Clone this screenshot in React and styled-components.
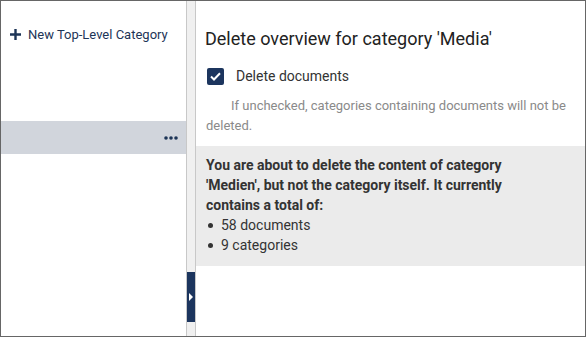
import React from 'react'
import styled, { createGlobalStyle } from 'styled-components'

const Global = createGlobalStyle`
  html, body { margin: 0; padding: 0; background: #fff; }
  body { font-family: Roboto, "Liberation Sans", sans-serif; }
`

const Frame = styled.div`
  width: 586px;
  height: 337px;
  box-sizing: border-box;
  border: 1px solid #666;
  display: flex;
  background: #fff;
`
const Sidebar = styled.div`
  width: 185px;
  border-right: 1px solid #c8c8c8;
  display: flex;
  flex-direction: column;
`
const NewButton = styled.div`
  display: flex;
  align-items: center;
  gap: 7px;
  height: 20px;
  margin-top: 23px;
  padding-left: 9px;
  color: #1d3557;
  font-size: 13px;
`
const TreeRow = styled.div`
  margin-top: 77px;
  height: 33px;
  background: #d1d5dc;
  display: flex;
  align-items: center;
  justify-content: flex-end;
  padding-right: 8px;
`
const Splitter = styled.div`
  width: 8px;
  background: #f0f0f0;
  border-right: 1px solid #c8c8c8;
  display: flex;
  flex-direction: column;
  justify-content: flex-end;
  padding-bottom: 14px;
`
const Tab = styled.div`
  height: 50px;
  background: #1c355e;
  display: flex;
  align-items: center;
  justify-content: center;
`
const Content = styled.div`
  flex: 1;
  display: flex;
  flex-direction: column;
`
const Title = styled.div`
  font-size: 18px;
  color: #222;
  padding: 27px 0 0 9px;
  line-height: 22px;
`
const CheckRow = styled.label`
  display: flex;
  align-items: center;
  gap: 12px;
  margin: 17px 0 0 11px;
  font-size: 14px;
  color: #333;
  height: 18px;
`
const Box = styled.span`
  width: 17px;
  height: 17px;
  border-radius: 2px;
  background: #1c355e;
  display: flex;
  align-items: center;
  justify-content: center;
`
const Hint = styled.p`
  margin: 11px 16px 0 10px;
  font-size: 13px;
  line-height: 20px;
  color: #8a8a8a;
  text-indent: 25px;
`
const Notice = styled.div`
  margin-top: 10px;
  background: #ebebeb;
  padding: 9px 10px 11px 10px;
  font-size: 14px;
  line-height: 20px;
  color: #333;
`
const Strong = styled.div`
  font-weight: bold;
  padding-right: 40px;
`
const List = styled.ul`
  margin: 0;
  padding: 0;
  list-style: none;
`
const Item = styled.li`
  display: flex;
  align-items: center;
  &::before {
    content: '';
    width: 5px;
    height: 5px;
    border-radius: 50%;
    background: #333;
    margin: 0 8px 0 2px;
  }
`

export default function App() {
  return (
    <>
      <Global />
      <Frame>
        <Sidebar>
          <NewButton>
            <svg width="11" height="11" viewBox="0 0 11 11">
              <path d="M5.5 0v11M0 5.5h11" stroke="#1d3557" strokeWidth="2.4" />
            </svg>
            New Top-Level Category
          </NewButton>
          <TreeRow>
            <svg width="14" height="4" viewBox="0 0 14 4">
              <circle cx="2" cy="2" r="1.8" fill="#1d3557" />
              <circle cx="7" cy="2" r="1.8" fill="#1d3557" />
              <circle cx="12" cy="2" r="1.8" fill="#1d3557" />
            </svg>
          </TreeRow>
        </Sidebar>
        <Splitter>
          <Tab>
            <svg width="4" height="8" viewBox="0 0 4 8">
              <path d="M0 0L4 4L0 8Z" fill="#fff" />
            </svg>
          </Tab>
        </Splitter>
        <Content>
          <Title>Delete overview for category 'Media'</Title>
          <CheckRow>
            <Box>
              <svg width="11" height="9" viewBox="0 0 11 9">
                <path d="M1 4.5L4 7.5L10 1.2" fill="none" stroke="#fff" strokeWidth="2" />
              </svg>
            </Box>
            Delete documents
          </CheckRow>
          <Hint>If unchecked, categories containing documents will not be deleted.</Hint>
          <Notice>
            <Strong>You are about to delete the content of category 'Medien', but not the category itself. It currently contains a total of:</Strong>
            <List>
              <Item>58 documents</Item>
              <Item>9 categories</Item>
            </List>
          </Notice>
        </Content>
      </Frame>
    </>
  )
}
